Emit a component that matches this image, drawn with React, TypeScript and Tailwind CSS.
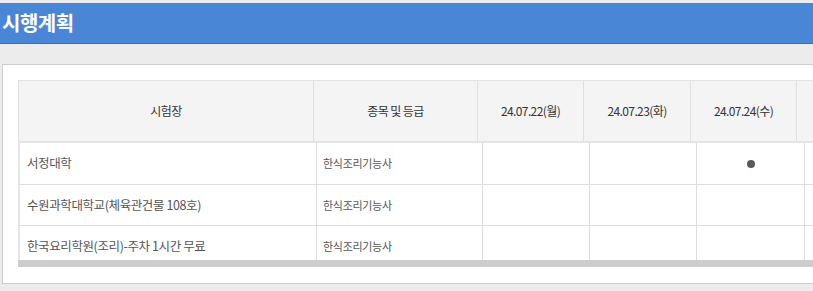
import React from 'react'

const headCols = [
  { label: '시험장', w: 'w-[296px]' },
  { label: '종목 및 등급', w: 'w-[164px]' },
  { label: '24.07.22(월)', w: 'w-[106px]' },
  { label: '24.07.23(화)', w: 'w-[107px]' },
  { label: '24.07.24(수)', w: 'w-[106px]' },
  { label: '', w: 'w-[106px]' },
]

const bodyWidths = ['w-[299px]', 'w-[166px]', 'w-[107px]', 'w-[107px]', 'w-[108px]', 'w-[108px]']

const rows = [
  { site: '서정대학', grade: '한식조리기능사', days: [false, false, true, false], h: 'h-[42px]' },
  { site: '수원과학대학교(체육관건물 108호)', grade: '한식조리기능사', days: [false, false, false, false], h: 'h-[41px]' },
  { site: '한국요리학원(조리)-주차 1시간 무료', grade: '한식조리기능사', days: [false, false, false, false], h: 'h-[41px]' },
]

const App = () => {
  return (
    <div className="w-[813px] h-[291px] overflow-hidden bg-[#ececec] font-['Malgun_Gothic','Noto_Sans_CJK_KR',sans-serif]">
      {/* Title bar */}
      <div className="mt-[3px] h-[41px] bg-[#4a86d6] border-b border-[#3b6fb6] flex items-center px-[2px]">
        <h1 className="text-white font-bold text-[20px] tracking-[-0.5px]">시행계획</h1>
      </div>

      {/* Panel */}
      <div className="mt-[20px] ml-[2px] w-[830px] h-[220px] bg-white border border-[#cccccc] pt-[15px] pl-[15px]">
        <div className="w-[840px]">
          {/* Header row */}
          <div className="flex h-[63px] bg-[#f4f4f4] border-t border-[#e2e2e2] border-b-2 border-b-[#e4e4e4]">
            {headCols.map((c, i) => (
              <div
                key={i}
                className={`${c.w} shrink-0 flex items-center justify-center text-[12px] text-[#333] tracking-[-0.6px] border-r border-[#e0e0e0] ${i === 0 ? 'border-l' : ''}`}
              >
                {c.label}
              </div>
            ))}
          </div>

          {/* Body rows, clipped by the scroll area */}
          <div className="h-[117px] overflow-hidden">
            {rows.map((r, ri) => (
              <div key={ri} className={`flex ${r.h} border-b border-[#dddddd]`}>
                <div className={`${bodyWidths[0]} shrink-0 flex items-center pl-[7px] text-[12.5px] text-[#555] tracking-[-0.4px] border-l-2 border-[#e6e6e6] border-r border-r-[#dddddd]`}>
                  {r.site}
                </div>
                <div className={`${bodyWidths[1]} shrink-0 flex items-center pl-[6px] text-[11px] text-[#555] tracking-[-0.3px] border-r border-[#dddddd]`}>
                  {r.grade}
                </div>
                {r.days.map((on, di) => (
                  <div key={di} className={`${bodyWidths[di + 2]} shrink-0 flex items-center justify-center border-r border-[#dddddd]`}>
                    {on && <span className="block w-[8px] h-[8px] rounded-full bg-[#555a60]" />}
                  </div>
                ))}
              </div>
            ))}
          </div>

          {/* Horizontal scrollbar */}
          <div className="h-[7px] bg-[#cdcdcd]" />
        </div>
      </div>
    </div>
  )
}

export default App
